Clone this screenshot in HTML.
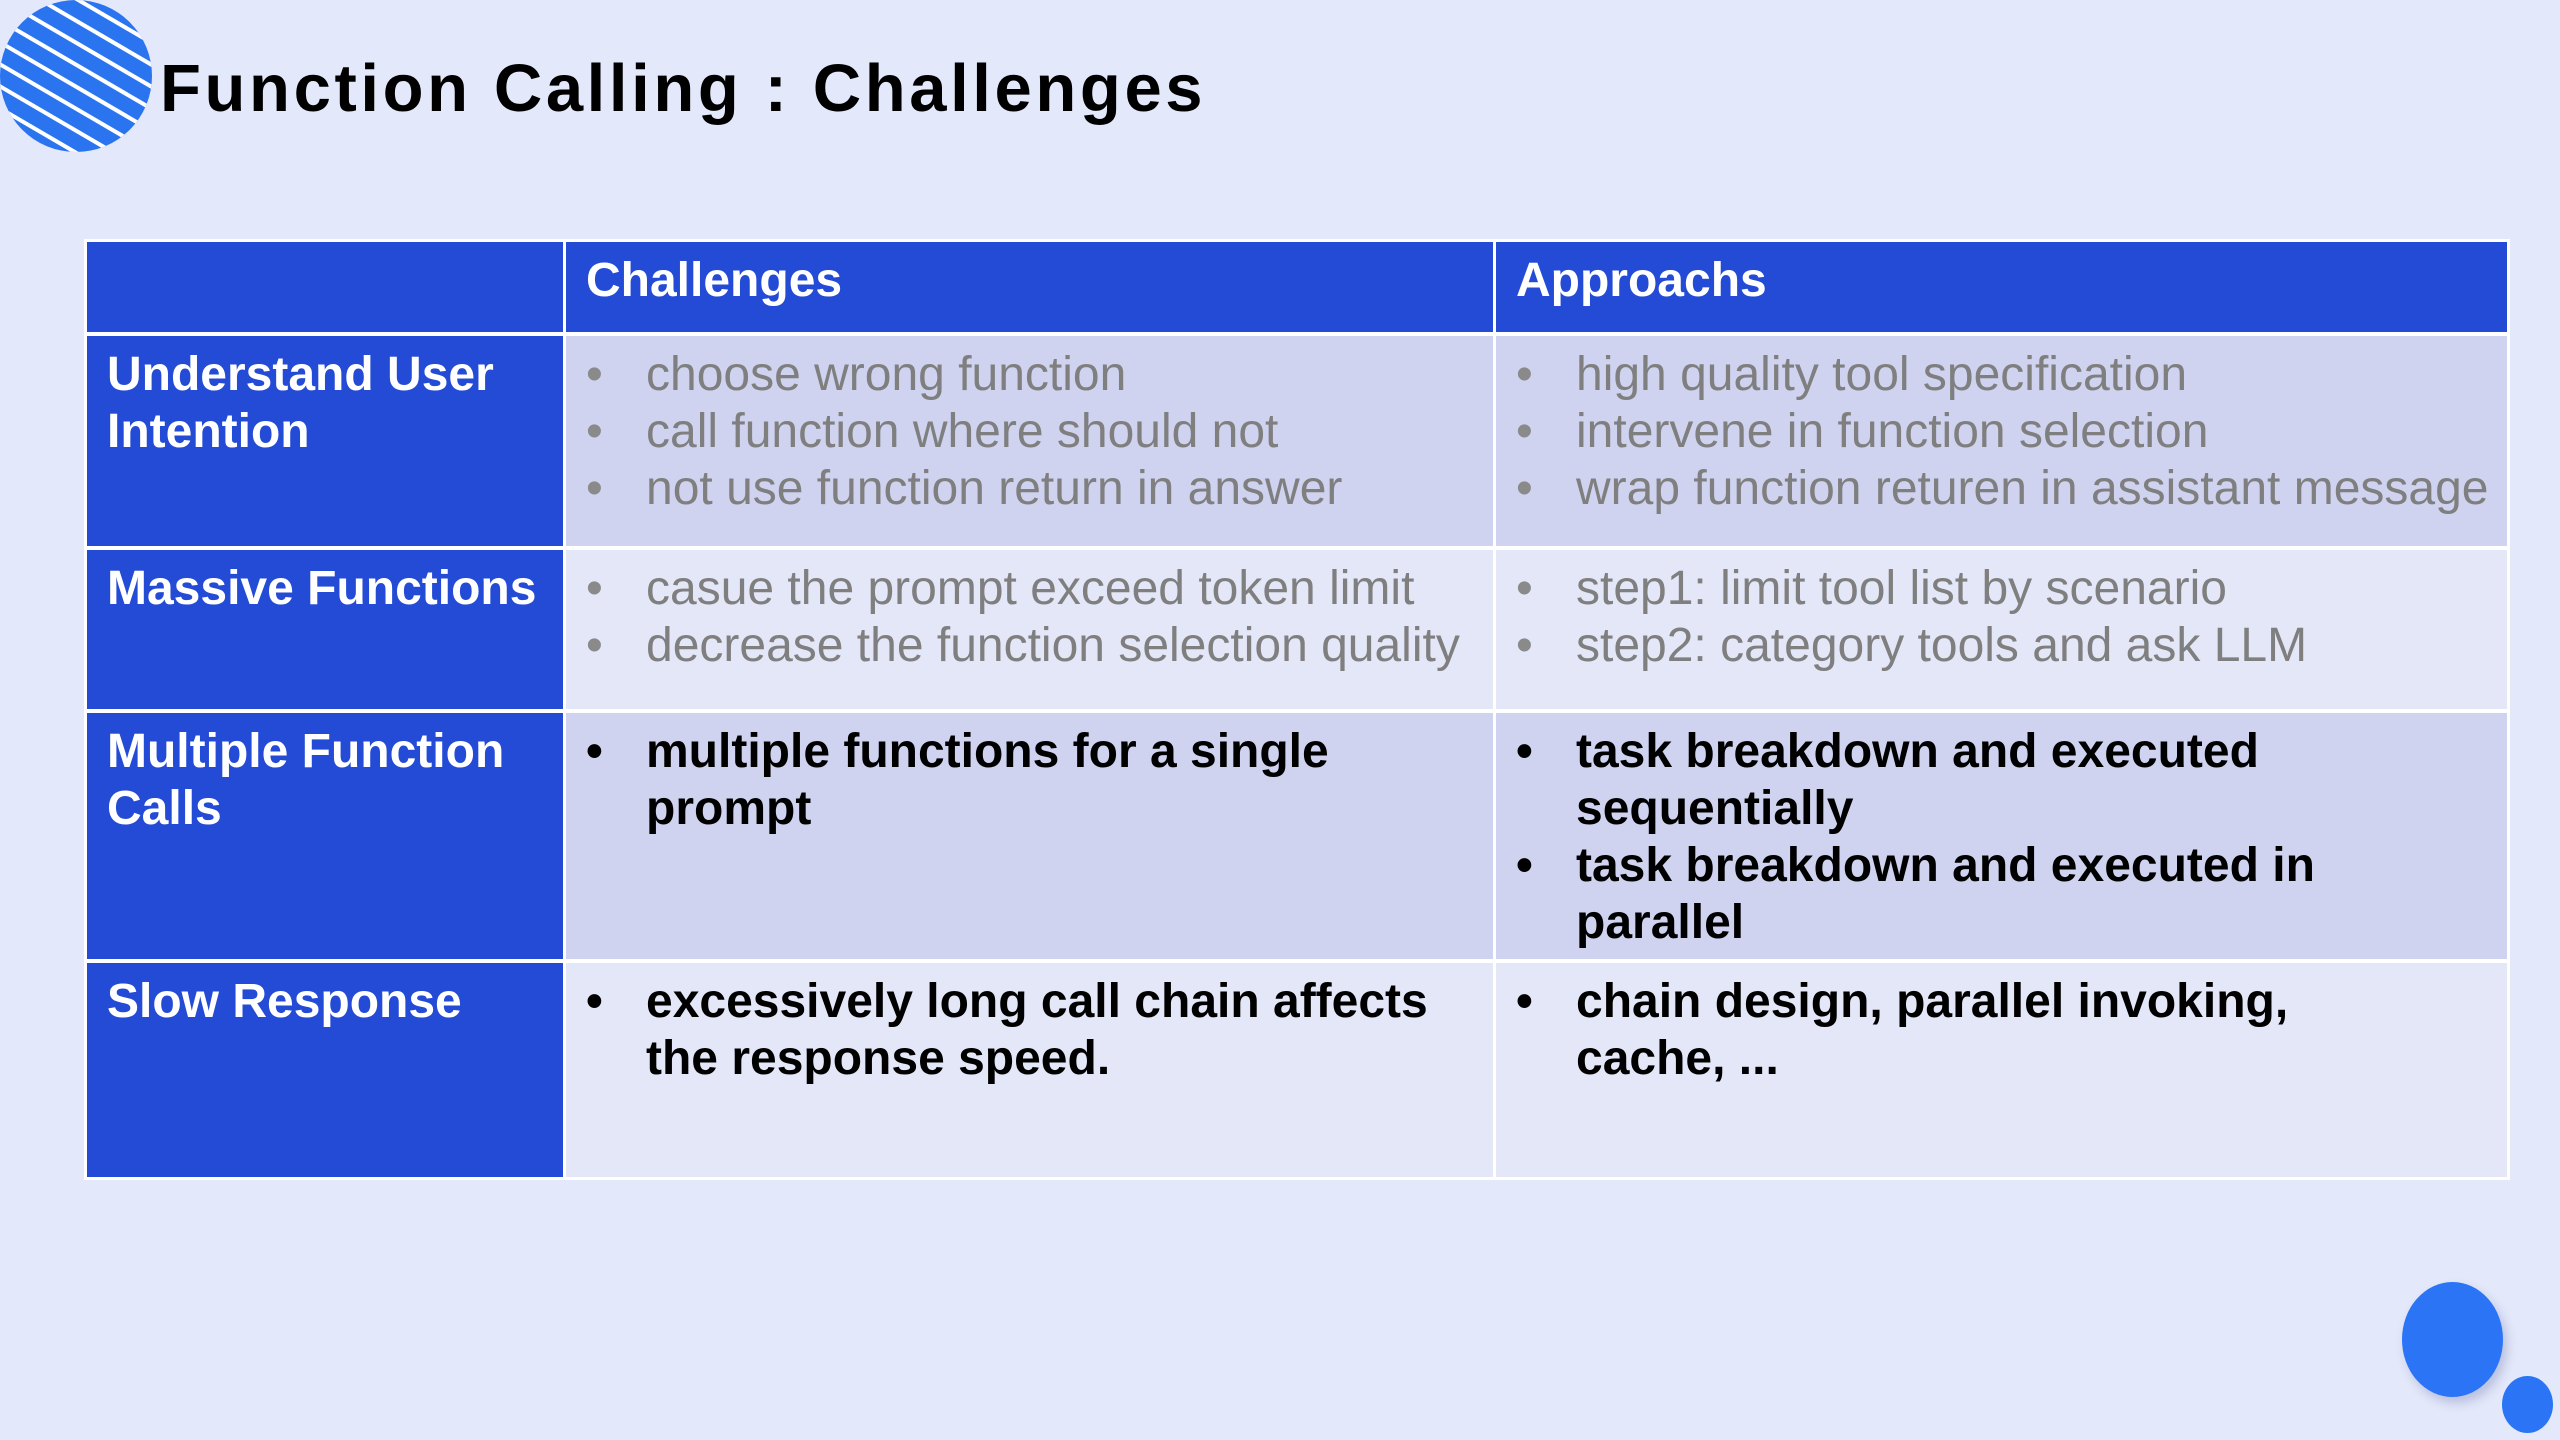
<!DOCTYPE html>
<html><head><meta charset="utf-8"><style>
*{margin:0;padding:0;box-sizing:border-box}
body{width:2560px;height:1440px;background:#e3e8fa;position:relative;overflow:hidden;font-family:"Liberation Sans",Arial,sans-serif}
.title{position:absolute;left:160px;top:44px;font-size:67px;font-weight:bold;letter-spacing:3.6px;color:#000;line-height:90px;white-space:nowrap}
.c{position:absolute;padding:10px 20px;font-size:48px;line-height:57px}
.b{background:#244bd6;color:#fff;font-weight:bold}
.l1{background:#cfd3f0}.l2{background:#e4e7f8}
ul{list-style:none}
li{position:relative;padding-left:60px}
li:before{content:"•";position:absolute;left:0;top:0}
.g{color:#7f7f7f;white-space:nowrap;padding-right:0}
.k{color:#000;font-weight:bold;padding-right:60px}
.g li:before{color:#8a8a8a}
</style></head><body>
<svg style="position:absolute;left:0;top:0" width="153" height="152" viewBox="0 0 153 152">
<defs><clipPath id="cp"><ellipse cx="76" cy="76" rx="76" ry="76"/></clipPath></defs>
<g clip-path="url(#cp)">
<rect width="153" height="152" fill="#2a74ef"/>
<g stroke="#fff" stroke-width="4">
<line x1="-40" y1="-25" x2="200" y2="115"/>
<line x1="-40" y1="-3" x2="200" y2="137"/>
<line x1="-40" y1="19" x2="200" y2="159"/>
<line x1="-40" y1="41" x2="200" y2="181"/>
<line x1="-40" y1="63" x2="200" y2="203"/>
<line x1="-40" y1="85" x2="200" y2="225"/>
<line x1="-40" y1="-47" x2="200" y2="93"/>
<line x1="-40" y1="-69" x2="200" y2="71"/>
</g></g></svg>
<div class="title">Function Calling : Challenges</div>

<div style="position:absolute;left:84px;top:239px;width:2426px;height:941px;background:#fff"></div>

<div class="c b" style="left:87px;top:242px;width:476px;height:90px"></div>
<div class="c b" style="left:566px;top:242px;width:927px;height:90px">Challenges</div>
<div class="c b" style="left:1496px;top:242px;width:1011px;height:90px">Approachs</div>

<div class="c b" style="left:87px;top:336px;width:476px;height:210px">Understand User Intention</div>
<div class="c l1 g" style="left:566px;top:336px;width:927px;height:210px"><ul><li>choose wrong function</li><li>call function where should not</li><li>not use function return in answer</li></ul></div>
<div class="c l1 g" style="left:1496px;top:336px;width:1011px;height:210px"><ul><li>high quality tool specification</li><li>intervene in function selection</li><li>wrap function returen in assistant message</li></ul></div>

<div class="c b" style="left:87px;top:550px;width:476px;height:159px">Massive Functions</div>
<div class="c l2 g" style="left:566px;top:550px;width:927px;height:159px"><ul><li>casue the prompt exceed token limit</li><li>decrease the function selection quality</li></ul></div>
<div class="c l2 g" style="left:1496px;top:550px;width:1011px;height:159px"><ul><li>step1: limit tool list by scenario</li><li>step2: category tools and ask LLM</li></ul></div>

<div class="c b" style="left:87px;top:713px;width:476px;height:246px">Multiple Function Calls</div>
<div class="c l1 k" style="left:566px;top:713px;width:927px;height:246px"><ul><li>multiple functions for a single prompt</li></ul></div>
<div class="c l1 k" style="left:1496px;top:713px;width:1011px;height:246px"><ul><li>task breakdown and executed sequentially</li><li>task breakdown and executed in parallel</li></ul></div>

<div class="c b" style="left:87px;top:963px;width:476px;height:214px">Slow Response</div>
<div class="c l2 k" style="left:566px;top:963px;width:927px;height:214px"><ul><li>excessively long call chain affects the response speed.</li></ul></div>
<div class="c l2 k" style="left:1496px;top:963px;width:1011px;height:214px"><ul><li>chain design, parallel invoking, cache, ...</li></ul></div>

<div style="position:absolute;left:2402px;top:1282px;width:101px;height:115px;border-radius:50%;background:#2a74f5;box-shadow:4px 6px 10px rgba(60,70,140,.25)"></div>
<div style="position:absolute;left:2502px;top:1376px;width:51px;height:57px;border-radius:50%;background:#2a74f5"></div>
</body></html>
